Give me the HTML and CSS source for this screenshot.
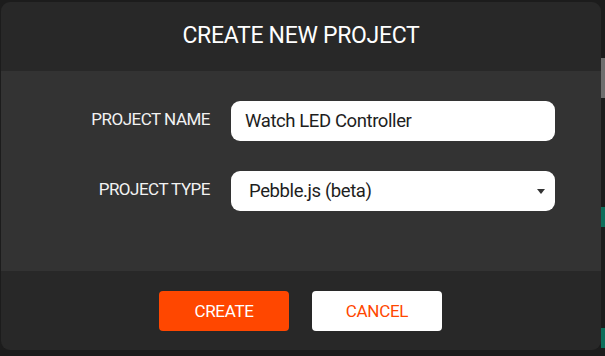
FILE: index.html
```html
<!DOCTYPE html>
<html>
<head>
<meta charset="utf-8">
<link rel="stylesheet" href="styles.css">
</head>
<body>
<div class="page">
  <div class="dialog">
    <div class="dialog-header">CREATE NEW PROJECT</div>
    <div class="dialog-body">
      <div class="form-grid">
        <label class="field-label">PROJECT NAME</label>
        <div class="text-input">Watch LED Controller</div>
        <label class="field-label">PROJECT TYPE</label>
        <div class="select-input">
          <span class="select-text">Pebble.js (beta)</span>
          <span class="caret"></span>
        </div>
      </div>
    </div>
    <div class="dialog-footer">
      <button class="btn btn-primary">CREATE</button>
      <button class="btn btn-secondary">CANCEL</button>
    </div>
  </div>
  <div class="side-strip">
    <div class="strip-gap1"></div>
    <div class="scroll-thumb"></div>
    <div class="strip-gap2"></div>
    <div class="teal-block"></div>
    <div class="strip-gap3"></div>
    <div class="teal-block"></div>
  </div>
</div>
</body>
</html>
```

FILE: styles.css
```css
html, body {
  margin: 0;
  padding: 0;
  background: #1c1c1c;
  width: 605px;
  height: 356px;
  overflow: hidden;
}
.page {
  display: flex;
  align-items: flex-start;
  font-family: Roboto, "Noto Sans", sans-serif;
}
.dialog {
  margin-left: 1px;
  margin-top: 2px;
  width: 600px;
  height: 348px;
  border-radius: 9px;
  overflow: hidden;
  display: flex;
  flex-direction: column;
}
.dialog-header {
  height: 69px;
  background: #282828;
  color: #ffffff;
  font-size: 23px;
  letter-spacing: -0.3px;
  display: flex;
  align-items: center;
  justify-content: center;
  padding-bottom: 3px;
  box-sizing: border-box;
}
.dialog-body {
  height: 200px;
  background: #333333;
  padding-top: 30px;
  box-sizing: border-box;
}
.form-grid {
  display: grid;
  grid-template-columns: 209px 324px;
  column-gap: 21px;
  row-gap: 30px;
}
.field-label {
  color: #f2f2f2;
  font-size: 17px;
  letter-spacing: -0.5px;
  text-align: right;
  align-self: center;
  margin-top: -4px;
}
.text-input, .select-input {
  height: 40px;
  background: #ffffff;
  border-radius: 9px;
  box-sizing: border-box;
  color: #1e1e1e;
  font-size: 18.5px;
  letter-spacing: -0.4px;
  display: flex;
  align-items: center;
}
.text-input {
  padding-left: 14px;
}
.select-input {
  padding-left: 18px;
  padding-right: 10px;
  justify-content: space-between;
}
.caret {
  width: 0;
  height: 0;
  border-left: 4px solid transparent;
  border-right: 4px solid transparent;
  border-top: 5px solid #333333;
}
.dialog-footer {
  flex: 1;
  background: #282828;
  display: flex;
  justify-content: center;
  gap: 23px;
  padding-top: 20px;
  padding-right: 1px;
  box-sizing: border-box;
}
.btn {
  width: 130px;
  height: 40px;
  border: none;
  border-radius: 4px;
  font-family: Roboto, "Noto Sans", sans-serif;
  font-size: 17px;
  letter-spacing: -0.3px;
  padding: 0;
}
.btn-primary {
  background: #ff4700;
  color: #ffffff;
}
.btn-secondary {
  background: #ffffff;
  color: #ff4700;
}
.side-strip {
  width: 4px;
  display: flex;
  flex-direction: column;
}
.strip-gap1 { height: 58px; }
.scroll-thumb { height: 40px; background: #6e6e6e; }
.strip-gap2 { height: 109px; }
.teal-block { height: 20px; background: #0d6e5b; }
.strip-gap3 { height: 101px; }
```
